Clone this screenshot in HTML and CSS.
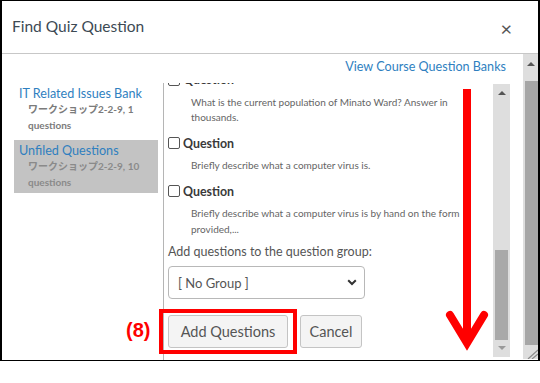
FILE: index.html
```html
<!DOCTYPE html>
<html>
<head>
<meta charset="utf-8">
<link rel="stylesheet" href="styles.css">
</head>
<body>
<div class="dialog">
  <div class="header">
    <span class="title">Find Quiz Question</span>
    <span class="close">×</span>
  </div>
  <div class="body">
    <div class="main">
      <div class="link-row"><a class="link">View Course Question Banks</a></div>
      <div class="panes">
        <div class="sidebar">
          <div class="bank">
            <div class="bank-title">IT Related Issues Bank</div>
            <div class="bank-sub">ワークショップ2-2-9, 1<br>questions</div>
          </div>
          <div class="bank selected">
            <div class="bank-title">Unfiled Questions</div>
            <div class="bank-sub">ワークショップ2-2-9, 10<br>questions</div>
          </div>
        </div>
        <div class="questions">
          <div class="qlist">
            <div class="q">
              <div class="q-head"><span class="cb"></span>Question</div>
              <div class="q-desc">What is the current population of Minato Ward? Answer in thousands.</div>
            </div>
            <div class="q">
              <div class="q-head"><span class="cb"></span>Question</div>
              <div class="q-desc">Briefly describe what a computer virus is.</div>
            </div>
            <div class="q">
              <div class="q-head"><span class="cb"></span>Question</div>
              <div class="q-desc">Briefly describe what a computer virus is by hand on the form provided,...</div>
            </div>
            <div class="group-label">Add questions to the question group:</div>
            <div class="select">
              <span>[ No Group ]</span>
              <svg class="chev" width="10" height="7" viewBox="0 0 10 7"><polyline points="1.2,1.2 5,5 8.8,1.2" fill="none" stroke="#333" stroke-width="2"/></svg>
            </div>
            <div class="buttons">
              <span class="btn btn-add">Add Questions</span>
              <span class="btn btn-cancel">Cancel</span>
            </div>
          </div>
        </div>
        <div class="inner-scroll">
          <div class="arrow-up"></div>
          <div class="inner-track"><div class="inner-thumb"></div></div>
          <div class="arrow-down"></div>
        </div>
      </div>
    </div>
    <div class="outer-scroll">
      <div class="outer-top"><div class="arrow-up"></div></div>
      <div class="outer-thumb"></div>
      <div class="outer-bottom">
        <svg width="13" height="12" viewBox="0 0 13 12"><line x1="3" y1="12" x2="13" y2="3" stroke="#8a8a8a" stroke-width="1.2"/><line x1="7" y1="12" x2="13" y2="7" stroke="#8a8a8a" stroke-width="1.2"/></svg>
      </div>
    </div>
  </div>

  <span class="step">(8)</span>
  <div class="redbox"></div>
  <svg class="red-arrow" width="44" height="262" viewBox="0 0 44 262">
    <line x1="22" y1="0" x2="22" y2="250" stroke="#ff0000" stroke-width="8"/>
    <polyline points="5,226 22,254 39,226" fill="none" stroke="#ff0000" stroke-width="8" stroke-linecap="round" stroke-linejoin="miter"/>
  </svg>
</div>
</body>
</html>
```
FILE: styles.css
```css
* { box-sizing: border-box; }
html, body { margin: 0; padding: 0; background: #fff; }
body { font-family: Lato, "Noto Sans CJK JP", sans-serif; }

.dialog {
  position: relative;
  width: 540px;
  height: 361px;
  border: 2px solid #000;
  border-top-width: 1px;
  border-bottom-width: 1px;
  background: #fff;
  display: flex;
  flex-direction: column;
  overflow: hidden;
}

.header {
  height: 53px;
  flex: none;
  border-bottom: 1px solid #c7c7c7;
  display: flex;
  align-items: center;
  justify-content: space-between;
  padding: 0 26px 2px 10px;
}
.title { font-size: 15.5px; color: #3d4a54; }
.close { font-size: 20px; color: #555; line-height: 1; margin-top: 4px; }

.body { flex: 1; display: flex; min-height: 0; }
.main { flex: 1; display: flex; flex-direction: column; min-width: 0; }

.link-row {
  height: 29px;
  flex: none;
  display: flex;
  justify-content: flex-end;
  padding: 4px 17px 0 0;
}
.link { font-size: 12.6px; line-height: 17px; color: #2f7fbf; }

.panes { flex: 1; display: flex; min-height: 0; }

.sidebar {
  width: 161px;
  flex: none;
  padding: 0 5px 0 12px;
}
.bank { padding: 2px 5px 3px; margin-bottom: 4px; }
.bank.selected { background: #c3c3c3; }
.bank-title { font-size: 12.6px; line-height: 17px; color: #2f7fbf; white-space: nowrap; }
.bank-sub {
  font-size: 10px;
  line-height: 15.5px;
  font-weight: 700;
  color: #7b7b7b;
  padding-left: 9px;
  white-space: nowrap;
}
.bank.selected .bank-sub { color: #8a8a8a; }

.questions {
  flex: 1;
  border-left: 1px solid #b5b5b5;
  overflow: hidden;
  padding-left: 4px;
  min-width: 0;
}
.qlist { margin-top: -14.5px; }
.q { margin-bottom: 6.5px; }
.q-head {
  display: flex;
  align-items: center;
  height: 22px;
  font-size: 12.4px;
  font-weight: 700;
  color: #3a3a3a;
}
.cb {
  width: 12px;
  height: 12px;
  border: 1px solid #555;
  border-radius: 2px;
  margin-right: 3px;
  background: #fff;
}
.q-desc {
  padding: 4px 23px 0 23px;
  font-size: 10px;
  line-height: 15.5px;
  color: #656565;
}
.group-label {
  margin-top: -1.5px;
  font-size: 12.5px;
  line-height: 20px;
  color: #555;
}
.select {
  margin-top: 4px;
  width: 197px;
  height: 33px;
  border: 1px solid #b8b8b8;
  border-radius: 4px;
  display: flex;
  align-items: center;
  justify-content: space-between;
  padding: 0 7px 0 9px;
  font-size: 13px;
  color: #555;
}
.buttons { margin-top: 16px; display: flex; gap: 12px; }
.btn {
  height: 33px;
  display: flex;
  align-items: center;
  justify-content: center;
  background: #f4f4f4;
  border: 1px solid #c4c4c4;
  border-radius: 3px;
  font-size: 14.5px;
  color: #555;
}
.btn-add { width: 120px; }
.btn-cancel { width: 62px; }

.inner-scroll {
  width: 17px;
  flex: none;
  margin: 1px 13px 3px 0;
  background: #dedede;
  display: flex;
  flex-direction: column;
  align-items: center;
}
.arrow-up {
  margin-top: 7px;
  width: 0; height: 0;
  border-left: 4px solid transparent;
  border-right: 4px solid transparent;
  border-bottom: 4px solid #555;
}
.inner-track { flex: 1; width: 100%; display: flex; flex-direction: column; justify-content: flex-end; padding: 0 2px 0; }
.inner-thumb { height: 90px; background: #a9a9a9; margin-bottom: 6px; }
.arrow-down {
  margin: 0 0 7px;
  width: 0; height: 0;
  border-left: 4px solid transparent;
  border-right: 4px solid transparent;
  border-top: 4px solid #999;
}

.outer-scroll {
  width: 15px;
  flex: none;
  background: #dedede;
  display: flex;
  flex-direction: column;
  margin-bottom: 1px;
}
.outer-top { height: 27px; display: flex; justify-content: center; }
.outer-top .arrow-up { margin-top: 8px; }
.outer-thumb { flex: 1; background: #a6a6a6; margin: 0 0 0 2px; }
.outer-bottom { height: 14px; display: flex; align-items: flex-end; justify-content: flex-end; }
.outer-bottom svg { display: block; }

.step {
  position: absolute;
  left: 124px;
  top: 317px;
  font-family: "Liberation Sans", sans-serif;
  font-weight: 700;
  font-size: 20px;
  line-height: 24px;
  color: #ff0000;
}
.redbox {
  position: absolute;
  left: 157px;
  top: 308px;
  width: 138px;
  height: 45px;
  border: 4px solid #ff0000;
}
.red-arrow {
  position: absolute;
  left: 443px;
  top: 88px;
}
```
